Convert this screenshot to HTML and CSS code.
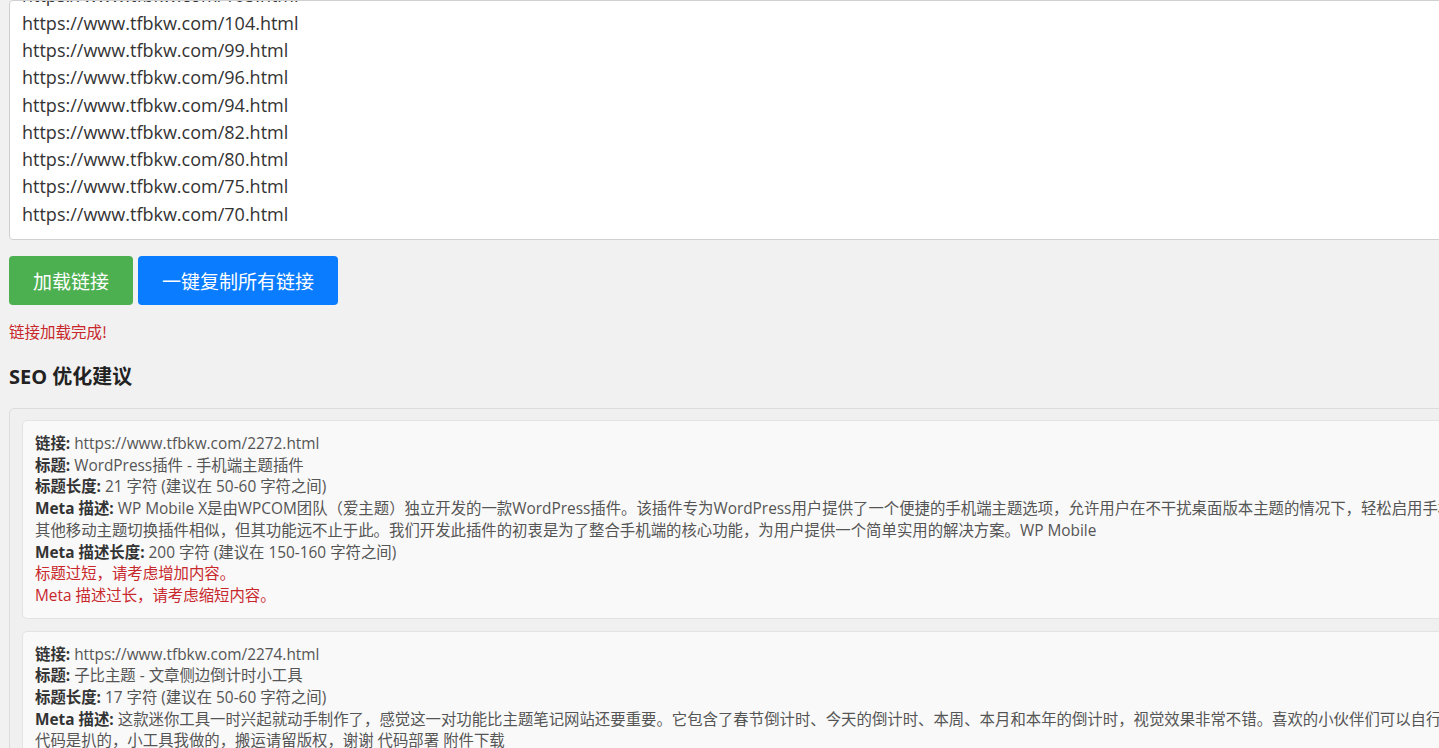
FILE: index.html
```html
<!DOCTYPE html>
<html lang="zh-CN">
<head>
<meta charset="utf-8">
<title>SEO 优化建议</title>
<link rel="stylesheet" href="styles.css">
</head>
<body>
<div class="page">
  <div class="url-box">
    <div class="url-lines">
      <div>https://www.tfbkw.com/105.html</div>
      <div>https://www.tfbkw.com/104.html</div>
      <div>https://www.tfbkw.com/99.html</div>
      <div>https://www.tfbkw.com/96.html</div>
      <div>https://www.tfbkw.com/94.html</div>
      <div>https://www.tfbkw.com/82.html</div>
      <div>https://www.tfbkw.com/80.html</div>
      <div>https://www.tfbkw.com/75.html</div>
      <div>https://www.tfbkw.com/70.html</div>
    </div>
  </div>

  <div class="actions">
    <button class="btn btn-green">加载链接</button>
    <button class="btn btn-blue">一键复制所有链接</button>
  </div>

  <p class="status">链接加载完成!</p>

  <h2 class="section-title">SEO 优化建议</h2>

  <div class="results">
    <div class="card">
      <div><b>链接:</b> https://www.tfbkw.com/2272.html</div>
      <div><b>标题:</b> WordPress插件 - 手机端主题插件</div>
      <div><b>标题长度:</b> 21 字符 (建议在 50-60 字符之间)</div>
      <div><b>Meta 描述:</b> WP Mobile X是由WPCOM团队（爱主题）独立开发的一款WordPress插件。该插件专为WordPress用户提供了一个便捷的手机端主题选项，允许用户在不干扰桌面版本主题的情况下，轻松启用手机端主题。与<br>其他移动主题切换插件相似，但其功能远不止于此。我们开发此插件的初衷是为了整合手机端的核心功能，为用户提供一个简单实用的解决方案。WP Mobile</div>
      <div><b>Meta 描述长度:</b> 200 字符 (建议在 150-160 字符之间)</div>
      <div class="warn">标题过短，请考虑增加内容。</div>
      <div class="warn">Meta 描述过长，请考虑缩短内容。</div>
    </div>
    <div class="card">
      <div><b>链接:</b> https://www.tfbkw.com/2274.html</div>
      <div><b>标题:</b> 子比主题 - 文章侧边倒计时小工具</div>
      <div><b>标题长度:</b> 17 字符 (建议在 50-60 字符之间)</div>
      <div><b>Meta 描述:</b> 这款迷你工具一时兴起就动手制作了，感觉这一对功能比主题笔记网站还要重要。它包含了春节倒计时、今天的倒计时、本周、本月和本年的倒计时，视觉效果非常不错。喜欢的小伙伴们可以自行部署使用，<br>代码是扒的，小工具我做的，搬运请留版权，谢谢 代码部署 附件下载</div>
      <div><b>Meta 描述长度:</b> 96 字符 (建议在 150-160 字符之间)</div>
      <div class="warn">标题过短，请考虑增加内容。</div>
      <div class="warn">Meta 描述过短，请考虑增加内容。</div>
    </div>
  </div>
</div>
</body>
</html>
```

FILE: styles.css
```css
html, body {
  margin: 0;
  padding: 0;
  overflow: hidden;
  background: #f1f1f1;
}

body {
  font-family: "Open Sans", "Noto Sans CJK SC", sans-serif;
  color: #333;
}

.page {
  width: 1800px;
  padding: 0 0 0 9px;
  display: flex;
  flex-direction: column;
  align-items: flex-start;
}

.url-box {
  box-sizing: border-box;
  width: 100%;
  height: 240px;
  background: #fff;
  border: 1px solid #d0d0d0;
  border-radius: 4px;
  padding: 0 12px 11px 12px;
  overflow: hidden;
  display: flex;
  flex-direction: column;
  justify-content: flex-end;
}

.url-lines {
  font-size: 18px;
  line-height: 27.3px;
  color: #333;
}

.actions {
  display: flex;
  gap: 5px;
  margin-top: 16px;
}

.btn {
  font-family: "Noto Sans CJK SC", sans-serif;
  font-size: 19px;
  color: #fff;
  border: none;
  border-radius: 4px;
  height: 49px;
  padding: 0 23px;
  cursor: pointer;
}

.btn-green { background: #4caf50; width: 124px; }
.btn-blue { background: #0a7cff; width: 200px; }

.status {
  margin: 16px 0 0 0;
  font-family: "Noto Sans CJK SC", sans-serif;
  font-size: 15.5px;
  line-height: 21px;
  color: #c8282c;
}

.section-title {
  margin: 21px 0 0 0;
  font-size: 20px;
  line-height: 28px;
  font-weight: 700;
  color: #222;
}

.results {
  box-sizing: border-box;
  width: 100%;
  margin-top: 17px;
  border: 1px solid #dcdcdc;
  border-radius: 5px;
  background: #f0f0f0;
  padding: 11px 12px;
  display: flex;
  flex-direction: column;
  gap: 12px;
}

.card {
  background: #f9f9f9;
  border: 1px solid #e3e3e3;
  border-radius: 5px;
  padding: 12px 12px 11px 12px;
  font-size: 15.4px;
  line-height: 21.7px;
  color: #555;
}

.card b {
  font-weight: 700;
  color: #333;
}

.card .warn {
  color: #c8282c;
}
```
